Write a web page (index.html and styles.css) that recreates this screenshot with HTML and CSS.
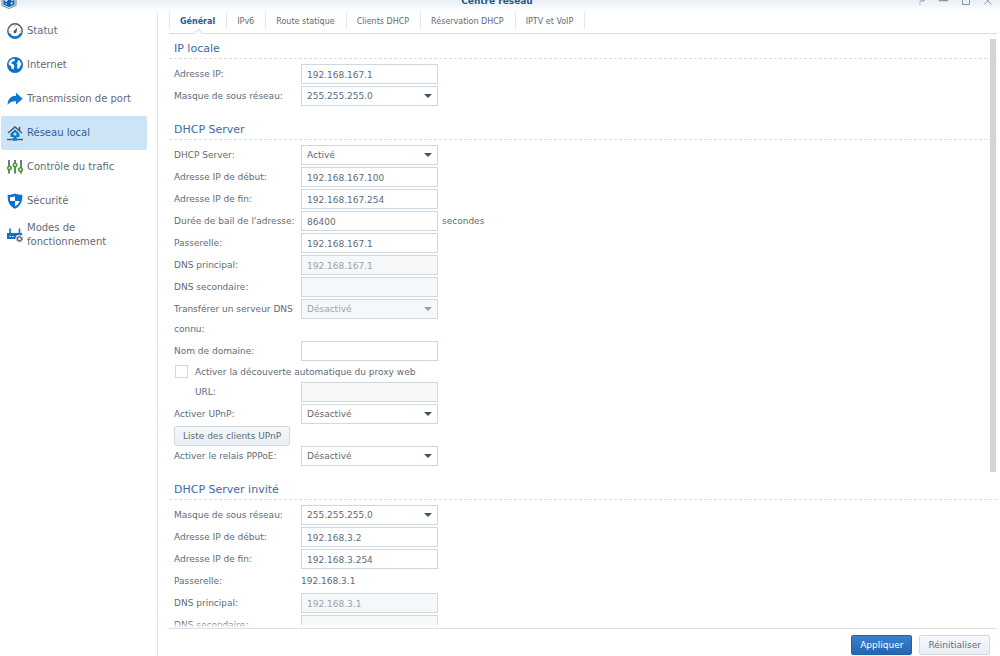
FILE: index.html
```html
<!DOCTYPE html>
<html lang="fr">
<head>
<meta charset="utf-8">
<title>Centre réseau</title>
<link rel="stylesheet" href="styles.css">
</head>
<body>
<header class="titlebar">
  <svg class="app-icon" viewBox="0 0 16 16" aria-hidden="true"><path d="M8 .5l7 3v9l-7 3-7-3v-9z" fill="#dfe6ec" stroke="#7d8a96"/><path d="M8 2l5.500 2.200v7.600L8 14l-5.500-2.200V4.200z" fill="#0b5fb4"/><path d="M3.500 5l3-1 1 2.500L5.500 9l-2-1zM9.500 4l2.500 1 .5 3-2.500-.5zM9 10l3-1-1 3zM4 10l2 .500 0 1.500z" fill="#cfe4f8"/></svg>
  <h1 class="title">Centre réseau</h1>
  <div class="window-controls">
    <button type="button" aria-label="Aide"><svg viewBox="0 0 10 10"><path d="M2 3V1h5v4H3v1M3 7.500v1.500" /></svg></button>
    <button type="button" aria-label="Réduire"><svg viewBox="0 0 10 10"><path d="M0 4.500h9" stroke-width="1.500"/></svg></button>
    <button type="button" aria-label="Agrandir"><svg viewBox="0 0 10 10"><path d="M1.500 1h7v7.500h-7z"/></svg></button>
    <button type="button" aria-label="Fermer"><svg viewBox="0 0 10 10"><path d="M1 1l7.500 7.500M8.500 1L1 8.500"/></svg></button>
  </div>
</header>
<div class="layout">
  <nav class="sidebar">
    <a class="nav-item" href="#"><svg viewBox="0 0 16 16"><circle cx="8" cy="8" r="7.200" fill="#fff" stroke="#4a5a66" stroke-width="1.400"/><path d="M2.200 10.500a6.300 6.300 0 0 0 11.600 0" fill="none" stroke="#0a78d1" stroke-width="2.200"/><path d="M8 2v1.500M2.400 8h1M12.600 8h1" stroke="#8a969f"/><path d="M10.200 4.800L9.500 9a1.500 1.500 0 1 1-2.200-1.500z" fill="#4a5a66"/></svg><span>Statut</span></a>
    <a class="nav-item" href="#"><svg viewBox="0 0 16 16"><circle cx="8" cy="8" r="8" fill="#0a72cc"/><path d="M3.500 3l3-1.500 1.500 1-.5 1.500-2 .500-1.500 2 2 .500 1.500 2-1 3.500-2-1-.5-2.500-2-1L1.500 6zM11 3l1.500.500 2 3.500-1 2-1.500 2.500-1.500.500-.5-2.500.5-1.500-1-1.500 1-1.500z" fill="#fff"/></svg><span>Internet</span></a>
    <a class="nav-item" href="#"><svg viewBox="0 0 16 16"><path d="M.5 14C1 7.500 4 5 9 4.800V1.800l6.700 5.900L9 13.400V10.300C5 10 2.500 11.300 .5 14z" fill="#0a78d1"/></svg><span>Transmission de port</span></a>
    <a class="nav-item active" href="#" aria-current="page"><svg viewBox="0 0 16 16"><path d="M8 4.500L12.500 8.500V12H9.500v2h-3v-2h-3V8.500z" fill="#0a78d1"/><path d="M1 8l7-6 7 6M12.500 2v4M0 14.500h5.500M10.500 14.500H16" fill="none" stroke="#4a5a66" stroke-width="1.600"/><circle cx="8" cy="9" r="1.600" fill="#cde3f6"/><path d="M5.500 14.500h5" stroke="#0a78d1" stroke-width="2.500"/></svg><span>Réseau local</span></a>
    <a class="nav-item" href="#"><svg viewBox="0 0 16 16"><path d="M2 1v13.500M8 1v13.500M14 1v13.500" stroke="#4a5a66" stroke-width="1.600"/><g fill="#fff" stroke="#3fa51c" stroke-width="1.600"><circle cx="2.500" cy="9" r="1.700"/><circle cx="8" cy="6" r="1.700"/><circle cx="13.500" cy="10.500" r="1.700"/></g></svg><span>Contrôle du trafic</span></a>
    <a class="nav-item" href="#"><svg viewBox="0 0 16 16"><path d="M8 .5c2.500 1 4.500 1.300 7.300 1.200C15.600 8 14 13 8 15.800 2 13 .4 8 .7 1.700 3.500 1.800 5.500 1.500 8 .5z" fill="#0a72cc"/><path d="M8 3.300V8H3.300C3 6.800 3 5.500 3 4.200c1.800 0 3.500-.2 5-.9zM8 8h4.700c-.6 2.200-2 4-4.700 5.200z" fill="#fff"/></svg><span>Sécurité</span></a>
    <a class="nav-item" href="#"><svg viewBox="0 0 16 16"><path d="M3 1.500V8M12.500 1.500V7" stroke="#0a72cc" stroke-width="1.600"/><path d="M0 6h15v6H0z" fill="#0a72cc"/><path d="M2.500 9.500h1.500M5 9.500h1.500" stroke="#fff"/><circle cx="12.500" cy="11.800" r="4" fill="#fff"/><circle cx="12.500" cy="11.800" r="2" fill="#fff" stroke="#5d6870" stroke-width="1.300"/><circle cx="12.500" cy="11.800" r="3" fill="none" stroke="#5d6870" stroke-dasharray="1.200 1.150"/></svg><span>Modes de fonctionnement</span></a>
  </nav>
  <main class="main">
    <div class="tabs" role="tablist">
      <button type="button" class="tab selected" role="tab" aria-selected="true">Général</button>
      <button type="button" class="tab" role="tab">IPv6</button>
      <button type="button" class="tab" role="tab">Route statique</button>
      <button type="button" class="tab" role="tab">Clients DHCP</button>
      <button type="button" class="tab" role="tab">Réservation DHCP</button>
      <button type="button" class="tab" role="tab">IPTV et VoIP</button>
    </div>
    <div class="viewport">
      <form class="form" id="network">
        <h2>IP locale</h2>
        <div class="row"><label for="ip">Adresse IP:</label><input id="ip" class="field" type="text" value="192.168.167.1"></div>
        <div class="row"><label for="mask">Masque de sous réseau:</label><div class="select"><select id="mask" class="field"><option>255.255.255.0</option></select></div></div>
        <h2>DHCP Server</h2>
        <div class="row"><label for="dhcp">DHCP Server:</label><div class="select"><select id="dhcp" class="field"><option>Activé</option></select></div></div>
        <div class="row"><label for="start">Adresse IP de début:</label><input id="start" class="field" type="text" value="192.168.167.100"></div>
        <div class="row"><label for="end">Adresse IP de fin:</label><input id="end" class="field" type="text" value="192.168.167.254"></div>
        <div class="row"><label for="lease">Durée de bail de l'adresse:</label><input id="lease" class="field" type="text" value="86400"><span class="unit">secondes</span></div>
        <div class="row"><label for="gw">Passerelle:</label><input id="gw" class="field" type="text" value="192.168.167.1"></div>
        <div class="row"><label for="dns1">DNS principal:</label><input id="dns1" class="field" type="text" value="192.168.167.1" disabled></div>
        <div class="row"><label for="dns2">DNS secondaire:</label><input id="dns2" class="field" type="text" disabled></div>
        <div class="row"><label for="fwd">Transférer un serveur DNS connu:</label><div class="select off"><select id="fwd" class="field" disabled><option>Désactivé</option></select></div></div>
        <div class="row"><label for="domain">Nom de domaine:</label><input id="domain" class="field" type="text"></div>
        <div class="row check"><input id="wpad" type="checkbox"><label for="wpad">Activer la découverte automatique du proxy web</label></div>
        <div class="row indent"><label for="url">URL:</label><input id="url" class="field" type="text" disabled></div>
        <div class="row"><label for="upnp">Activer UPnP:</label><div class="select"><select id="upnp" class="field"><option>Désactivé</option></select></div></div>
        <div class="row-button"><button type="button" class="btn">Liste des clients UPnP</button></div>
        <div class="row"><label for="pppoe">Activer le relais PPPoE:</label><div class="select"><select id="pppoe" class="field"><option>Désactivé</option></select></div></div>
        <h2>DHCP Server invité</h2>
        <div class="row"><label for="gmask">Masque de sous réseau:</label><div class="select"><select id="gmask" class="field"><option>255.255.255.0</option></select></div></div>
        <div class="row"><label for="gstart">Adresse IP de début:</label><input id="gstart" class="field" type="text" value="192.168.3.2"></div>
        <div class="row"><label for="gend">Adresse IP de fin:</label><input id="gend" class="field" type="text" value="192.168.3.254"></div>
        <div class="row"><span>Passerelle:</span><span>192.168.3.1</span></div>
        <div class="row"><label for="gdns1">DNS principal:</label><input id="gdns1" class="field" type="text" value="192.168.3.1" disabled></div>
        <div class="row"><label for="gdns2">DNS secondaire:</label><input id="gdns2" class="field" type="text" disabled></div>
      </form>
      <div class="thumb"></div>
      <div class="fade"></div>
    </div>
    <footer class="actions">
      <button type="submit" form="network" class="btn primary">Appliquer</button>
      <button type="reset" form="network" class="btn">Réinitialiser</button>
    </footer>
  </main>
</div>
</body>
</html>
```
FILE: styles.css
```css
* { box-sizing: border-box; }
body {
  margin: 0;
  height: 100vh;
  display: flex;
  flex-direction: column;
  overflow: hidden;
  background: #fff;
  color: #5f6b76;
  font: 9px/20px "DejaVu Sans", Verdana, sans-serif;
}
button, input, select { font: inherit; color: inherit; margin: 0; }

.titlebar {
  flex: none;
  height: 22px;
  margin-top: -10px;
  padding: 0 7px 0 1px;
  display: grid;
  grid-template-columns: 1fr auto 1fr;
  align-items: center;
  background: linear-gradient(#e9eff4 45%, #fff);
}
.app-icon { width: 16px; height: 16px; }
.title { margin: 0; font-size: 9px; line-height: 16px; color: #28588f; }
.window-controls { display: flex; justify-content: flex-end; gap: 12px; }
.window-controls button { border: 0; padding: 0; background: none; width: 10px; height: 10px; }
.window-controls svg { display: block; width: 10px; height: 10px; fill: none; stroke: #8b959e; }

.layout { flex: 1; min-height: 0; display: flex; }
.sidebar { flex: none; width: 158px; padding: 2px 10px 0 1px; border-right: 1px solid #e2e5e8; }
.nav-item {
  display: flex;
  align-items: center;
  gap: 4px;
  height: 34px;
  padding: 0 6px;
  border-radius: 2px;
  font-size: 10px;
  line-height: 14px;
  color: #5f6b76;
  text-decoration: none;
}
.nav-item svg { flex: none; width: 16px; height: 16px; }
.nav-item.active { background: #cde3f6; color: #2f5f96; }

.main { flex: 1; min-width: 0; padding: 0 3px 0 11px; display: flex; flex-direction: column; }
.tabs { flex: none; display: flex; height: 22px; border-bottom: 1px solid #dcdfe1; }
.tab {
  position: relative;
  height: 17px;
  padding: 2px 11px 0 10px;
  border: 0;
  border-right: 1px solid #dfe6ee;
  background: none;
  font-size: 8px;
  line-height: 15px;
}
.tab.selected { border-left: 1px solid #dfe6ee; font-weight: bold; color: #28588f; }
.tab.selected::after {
  content: "";
  position: absolute;
  left: 50%;
  bottom: -8px;
  width: 6px;
  height: 6px;
  margin-left: -3px;
  transform: rotate(45deg);
  border: solid #dcdfe1;
  border-width: 1px 0 0 1px;
  background: #fff;
}

.viewport { position: relative; flex: 1; min-height: 0; overflow: hidden; }
.form { height: 100%; overflow-y: auto; scrollbar-width: none; padding-top: 5px; }
h2 {
  height: 20px;
  margin: 12px 0 5px;
  padding-left: 5px;
  border-bottom: 1px dashed #d8dee4;
  font-size: 11px;
  font-weight: normal;
  line-height: 20px;
  color: #3a6a9f;
}
h2:first-child { margin-top: 0; }
.row { display: grid; grid-template-columns: 127px 137px 1fr; align-items: start; padding: 0 5px 2px; }
.field {
  display: block;
  width: 100%;
  height: 20px;
  padding: 0 5px;
  border: 1px solid #cfd7df;
  border-radius: 0;
  background: #fff;
  appearance: none;
  line-height: 18px;
}
input.field { padding-top: 2px; line-height: 16px; }
.field:disabled { background: #f5f7f9; color: #9aa3ac; opacity: 1; }
.select { position: relative; }
.select::after {
  content: "";
  position: absolute;
  right: 6px;
  top: 8px;
  border: solid transparent;
  border-width: 4px 4px 0;
  border-top-color: #44535f;
  pointer-events: none;
}
.select.off::after { border-top-color: #96a0aa; }
.unit { padding-left: 4px; }
.row.check { display: flex; align-items: center; gap: 7px; height: 19px; padding-bottom: 2px; }
.check input { appearance: none; width: 13px; height: 13px; margin-left: 1px; border: 1px solid #cfd7df; background: #fff; }
.indent label { padding-left: 21px; }
.row-button { display: flex; padding: 0 5px; }
.btn {
  height: 20px;
  padding: 0 8px;
  border: 1px solid #d0dae4;
  border-radius: 2px;
  background: linear-gradient(#f5f9fc, #e9eff5);
  line-height: 18px;
}
.btn.primary { border-color: #2160a8; background: linear-gradient(#3c80cc, #2464b0); color: #fff; }
.thumb { position: absolute; right: 1px; top: 5px; width: 6px; height: 433px; background: #d2d4d6; }
.fade { position: absolute; left: 0; right: 0; bottom: 0; height: 6px; background: linear-gradient(#fff0, #fff); }
.actions {
  flex: none;
  display: flex;
  justify-content: flex-end;
  gap: 7px;
  padding: 6px 7px 1px 0;
  border-top: 1px solid #dfe1e3;
}
```
